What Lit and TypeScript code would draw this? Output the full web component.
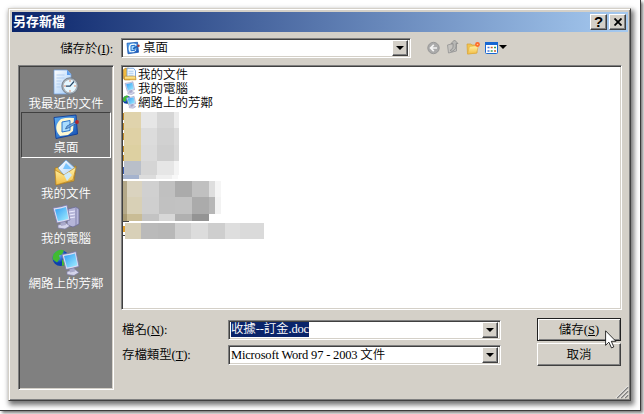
import { LitElement, html, svg, css } from "lit";
import { customElement } from "lit/decorators.js";

type Tile = [number, number, number, number, string];

const band = (y: number, h: number, edges: number[], colors: string[]): Tile[] =>
  colors.map((c, i) => [edges[i], y, edges[i + 1] - edges[i], h, c] as Tile);

const A = [124, 141, 157, 174, 179];
const B = [123, 127, 142, 159, 175, 192, 209, 215, 221];
const tiles: Tile[] = [
  ...band(112, 16, A, ["#e0d3ac", "#e6e6e6", "#d6d6d6", "#ebebeb"]),
  ...band(128, 17, A, ["#dfd1a5", "#dcdcdc", "#d1d1d1", "#dadada"]),
  ...band(145, 16, A, ["#ddd0a1", "#dadada", "#cecece", "#d8d8d8"]),
  ...band(161, 14, A, ["#b9bfc9", "#d5d5d5", "#e6e6e6", "#f4f4f4"]),
  ...band(175, 4, [123, 139, 156, 172, 178], ["#a5b3ce", "#dcdcdc", "#efefef", "#f8f8f8"]),
  ...band(181, 16, B, ["#b3a888", "#dad3bf", "#d0d0d0", "#c0c0c0", "#ababab", "#c0c0c0", "#dedede", "#f5f5f5"]),
  ...band(197, 17, B, ["#b3a888", "#d8d0b6", "#cfcfcf", "#c1c1c1", "#c2c2c2", "#ababab", "#b6b6b6", "#f2f2f2"]),
  ...band(214, 7, B.slice(0, 7), ["#a99b73", "#c9bc95", "#c3c3c3", "#d7d7d7", "#b0b0b0", "#949494"]),
  ...band(223, 16, [125, 141, 158, 175, 191, 208, 225, 240, 264],
    ["#d8d0b8", "#bababa", "#b8b8b8", "#d0d0d0", "#dcdcdc", "#cecece", "#dedede", "#dadada"]),
  [123, 113, 1, 7, "#c08a28"], [123, 123, 1, 7, "#c08a28"], [123, 133, 1, 7, "#c08a28"],
  [123, 146, 1, 6, "#c08a28"], [123, 155, 1, 6, "#c08a28"], [123, 167, 1, 7, "#3a5cb0"],
  [123, 221, 6, 1, "#444444"], [123, 226, 2, 6, "#e0a030"], [123, 235, 2, 1, "#444444"],
];

const defs = svg`<defs>
  <linearGradient id="scr" x2="1" y2="1"><stop stop-color="#2f9cf4"/><stop offset="1" stop-color="#a4efff"/></linearGradient>
  <linearGradient id="fold" x2="0" y2="1"><stop stop-color="#fff3a8"/><stop offset="1" stop-color="#f2bd45"/></linearGradient>
  <linearGradient id="blue" x2="1" y2="1"><stop stop-color="#5fb0f4"/><stop offset="1" stop-color="#1450b4"/></linearGradient>
  <linearGradient id="page" x2="1" y2="1"><stop stop-color="#ffffff"/><stop offset="1" stop-color="#9fcaf8"/></linearGradient>
  <radialGradient id="globe" cx=".35" cy=".3"><stop stop-color="#7cc4ff"/><stop offset="1" stop-color="#0b3fae"/></radialGradient>
</defs>`;

const monitor = svg`
  <path d="M6 21l8-2 4 3-5 3-7-1z" fill="#d4d4ea" stroke="#7e7ea8" stroke-width=".7"/>
  <path d="M8 17l5-1 1 5-5 1z" fill="#aaaacb"/>
  <path d="M1 4Q9 3 15 1L18 16Q11 18 5 19z" fill="#dcdcf2" stroke="#7777a5" stroke-width=".8"/>
  <path d="M3 5.500Q9 4.500 14 3L16.400 14.700Q11 16.400 6 17z" fill="url(#scr)"/>`;

const globe = svg`<circle cx="8.500" cy="9" r="8" fill="url(#globe)"/>
  <path d="M4 2.500q4-3 8-1l-2 4-3 1 1 3-3 4-4-3q-1-5 3-8zM10 11l4-2 2 3-3 4-3 1z" fill="#42ba32"/>`;

const art = {
  recent: svg`<path d="M2 1h13l4 4v20H2z" fill="url(#page)" stroke="#6d9fe0" stroke-width=".7"/>
    <path d="M15 1v5h4z" fill="#5c9cec"/><path d="M4.500 6h8M4.500 9h8M4.500 12h5M4.500 15h4M4.500 18h4" stroke="#a9c8ee" stroke-width=".8"/>
    <circle cx="18" cy="17" r="8.200" fill="#a8b0b8" stroke="#68727c" stroke-width=".8"/>
    <circle cx="18" cy="17" r="6.300" fill="#e5f7ff"/>
    <path d="M22 12.500L18 17.200h-4" fill="none" stroke="#244668" stroke-width="1.200"/>
    <circle cx="18" cy="12" r=".7" fill="#e06030"/><circle cx="18" cy="22" r=".7" fill="#e06030"/><circle cx="13" cy="17" r=".7" fill="#e06030"/><circle cx="23" cy="17" r=".7" fill="#e06030"/>`,
  desktop: svg`<path d="M2 4.500L24 2 25.500 21 4 25.500z" fill="url(#blue)" stroke="#0d3d98" stroke-width=".9"/>
    <path d="M9 6Q15 4 22 5l-1 13-5 4-8 1Q0 14 9 6z" fill="#fff9d2"/>
    <path d="M10 9l8-1.500v10L10 19z" fill="#a9dcff" stroke="#2d76cc" stroke-width="1"/>
    <path d="M13.500 16l1.500-3 8-4 1.200 1.500-8 4.500z" fill="#6fa8e4" stroke="#184888" stroke-width=".6"/>
    <circle cx="25" cy="9" r="1.900" fill="#b3272b"/>`,
  docs: svg`<path d="M3 9l8-2 3 3 10-3-2 15-18 4z" fill="#edbd4b" stroke="#9c7424" stroke-width=".7"/>
    <path d="M6 9L14 1l10 9-8 11z" fill="url(#page)" stroke="#5d9bd8" stroke-width=".7"/><path d="M14 4l6 6h-9z" fill="#78c4ff"/>
    <path d="M3 11l9 5 12-8-3 13-17 5z" fill="url(#fold)" stroke="#b88424" stroke-width=".7"/>
    <path d="M12 16l5-3 3 3-5 6z" fill="#cdeafc"/>`,
  computer: svg`<path d="M16 5l8-2 3 2v15l-6 3-6-2z" fill="#b5b5d8" stroke="#6b6b98" stroke-width=".8"/>
    <path d="M17 8l6-1M17 11l6-1M17 14l6-1" stroke="#ececff"/><path d="M24 4v17" stroke="#8585b1"/>${monitor}`,
  network: svg`${globe}<g transform="translate(9 1.500)">${monitor}</g>`,
  deskMini: svg`<path d="M2 4L23 2 25 22 4 25z" fill="url(#blue)" stroke="#1252b0" stroke-width="1.500"/>
    <path d="M8 6Q15 3 21 6l-1 13-5 3-8 0Q3 13 8 6z" fill="#eefaff"/>
    <path d="M10 9l8-1v10l-8 1z" fill="#a9dcff" stroke="#2270cc" stroke-width="2"/>
    <path d="M14 15l9-5" stroke="#1e64b8" stroke-width="3"/><circle cx="25" cy="9" r="2.500" fill="#a83c3c"/>`,
  docsMini: svg`<path d="M1 5l3-3h8l2 3v20H3L1 23z" fill="#f0b93c" stroke="#b07818" stroke-width="1.200"/>
    <path d="M8 2h13l4 5v15H8z" fill="#f4faff" stroke="#5c94d8" stroke-width="1.500"/>
    <path d="M11 8h10M11 12h10M11 16h10" stroke="#8ab8ea" stroke-width="1.400"/>
    <path d="M3 18h22l1 7H3z" fill="url(#fold)" stroke="#bd8420" stroke-width="1.200"/>`,
  pcMini: svg`<g transform="translate(3 0) scale(1.120 1.060)">${monitor}</g>`,
  netMini: svg`<g transform="translate(-1 0)">${globe}</g><g transform="translate(6 1) scale(1.080 1)">${monitor}</g>`,
};

const icon = (name: keyof typeof art, cls: string) =>
  html`<svg class=${cls} viewBox="0 0 28 27">${defs}${art[name]}</svg>`;

const arrow = html`<span class="drop"><svg width="8" height="4" viewBox="0 0 8 4"><path d="M0 0h8L4 4z"/></svg></span>`;

@customElement("app-root")
export class AppRoot extends LitElement {
  static styles = css`
    :host {
      display: block; width: 644px; height: 414px; overflow: hidden; background: #fff; color: #000;
      font: 350 12.500px/14px "Liberation Serif", "Noto Sans CJK TC", serif;
    }
    * { box-sizing: border-box; }
    .frame {
      width: 641px; height: 411px; padding: 8px 0 0 8px; border: solid #3c3c3c; border-width: 0 1px 1px 0;
      box-shadow: 2px 2px 3px #777;
    }
    .dialog {
      width: 623px; height: 393px; background: #d4d0c8; padding: 2px; display: flex; flex-direction: column;
      border: 1px solid; border-color: #d4d0c8 #404040 #404040 #d4d0c8; position: relative;
      box-shadow: inset 1px 1px #fff, inset -1px -1px #808080, 2px 3px 5px 1px rgba(0,0,0,.55);
    }
    .title {
      height: 20px; margin: 1px 0 0 1px; display: flex; align-items: center; gap: 2px; padding-right: 2px;
      background: linear-gradient(90deg, #0a246a, #a6caf0); color: #fff; font-weight: 700; font-size: 13px;
    }
    .title span { flex: 1; padding-left: 1px; }
    .raised {
      background: #d4d0c8; border: 1px solid; border-color: #fff #404040 #404040 #fff;
      box-shadow: inset -1px -1px #808080; display: flex; align-items: center; justify-content: center;
    }
    .cap { width: 17px; height: 16px; }
    .cap b { color: #000; font: 700 15px/14px "Liberation Sans", sans-serif; }
    .tools { display: flex; align-items: center; height: 20px; margin-top: 6px; }
    .tools .lbl { width: 102px; text-align: right; margin-right: 8px; padding-top: 1px; }
    .lbl { letter-spacing: -.1px; }
    .combo {
      height: 20px; background: #fff; border: 1px solid; border-color: #808080 #fff #fff #808080;
      box-shadow: inset 1px 1px #404040, inset -1px -1px #d4d0c8; padding: 2px; display: flex; align-items: center;
    }
    .combo .val { flex: 1; white-space: nowrap; }
    .where { width: 290px; }
    .where .mini { margin: 0 3px 0 2px; }
    .drop {
      width: 16px; height: 16px; background: #d4d0c8; border: 1px solid; border-color: #fff #404040 #404040 #fff;
      box-shadow: inset -1px -1px #808080; display: flex; align-items: center; justify-content: center;
    }
    .acts { margin-left: 16px; }
    .main { display: flex; gap: 7px; margin: 7px 0 0 7px; }
    .places {
      width: 96px; height: 325px; background: #808080; color: #fff; padding: 2px;
      border: 1px solid; border-color: #808080 #fff #fff #808080; box-shadow: inset 1px 1px #404040, inset -1px -1px #d4d0c8;
    }
    .place { height: 45px; display: flex; flex-direction: column; align-items: center; padding-top: 1px; }
    .place.on { border: 1px solid; border-color: #404040 #fff #fff #404040; background: #7b7b7b; padding-top: 0; margin-top: -1px; height: 46px; }
    .big { width: 28px; height: 27px; flex: none; }
    .place span { line-height: 14px; white-space: nowrap; padding-top: 1px; }
    .mini { width: 14px; height: 14px; flex: none; }
    .right { width: 501px; }
    .list {
      height: 245px; background: #fff; padding: 1px; overflow: hidden;
      border: 1px solid; border-color: #808080 #fff #fff #808080; box-shadow: inset 1px 1px #404040, inset -1px -1px #d4d0c8;
    }
    .item { display: flex; gap: 1px; height: 14px; white-space: nowrap; line-height: 16px; }
    .mosaic { display: block; }
    .form {
      display: grid; grid-template-columns: 106px 273px 36px 84px; justify-content: start;
      padding-left: 1px; margin-top: 8px; row-gap: 2px; align-items: center;
    }
    .btn { grid-column: 4; height: 23px; position: relative; }
    .btn.def { outline: 1px solid #202020; outline-offset: -1px; border-color: #000; box-shadow: inset 1px 1px #fff, inset -1px -1px #808080; z-index: 1; }
    mark { background: #0a246a; color: #fff; display: inline-block; height: 15px; line-height: 15px; letter-spacing: -.15px; }
    .row2 { margin-top: 1px; }
    .cursor { position: absolute; left: 67px; top: 11px; }
    .grip { width: 14px; height: 14px; position: absolute; left: 606px; top: 376px; }
    .lat { letter-spacing: -.18px; }
    u { text-underline-offset: 1px; text-decoration-thickness: 1px; }
  `;

  private place(name: keyof typeof art, label: string, on = false) {
    return html`<div class="place ${on ? "on" : ""}">${icon(name, "big")}<span>${label}</span></div>`;
  }

  private item(name: keyof typeof art, label: string) {
    return html`<div class="item">${icon(name, "mini")}<span>${label}</span></div>`;
  }

  render() {
    return html`<div class="frame"><div class="dialog">
      <div class="title"><span>另存新檔</span>
        <div class="raised cap"><b>?</b></div>
        <div class="raised cap"><svg width="8" height="8" viewBox="0 0 8 8"><path d="M.5 .5l7 7M7.500 .5l-7 7" stroke="#000" stroke-width="1.800"/></svg></div>
      </div>
      <div class="tools">
        <div class="lbl">儲存於(<u>I</u>):</div>
        <div class="combo where">${icon("deskMini", "mini")}<span class="val">桌面</span>${arrow}</div>
        <svg class="acts" width="84" height="18" viewBox="0 0 84 18">${defs}
          <circle cx="6.500" cy="9" r="5.700" fill="#aaa" stroke="#989898"/><path d="M10 9H4M6.800 5.800L3.600 9l3.200 3.200" fill="none" stroke="#f4f4f4" stroke-width="1.700"/>
          <path d="M20.500 6l4-1 1 1 4-1v7l-8 2z" fill="#c5c3bf" stroke="#999" stroke-width=".9"/>
          <path d="M23 11.500q4-2 3-7h-2l3.500-3.500L31 4.500h-2q1 6-4 8z" fill="#b8b8b5" stroke="#8c8c8c" stroke-width=".8"/>
          <path d="M40 5h4l1 1h5v8l-9.500 1z" fill="#f2c44f" stroke="#d6a035" stroke-width=".7"/><path d="M40.500 15l2-7.500 9-1-2 7.500z" fill="url(#fold)" stroke="#dba83c" stroke-width=".5"/>
          <circle cx="50.500" cy="5.500" r="2.400" fill="#ff6828"/><circle cx="50.500" cy="5.500" r=".8" fill="#ffd080"/>
          <rect x="58.500" y="3.500" width="12" height="11" rx="1" fill="#fff" stroke="#1767d2"/><path d="M58 4.500h13" stroke="#1767d2" stroke-width="3"/>
          <path d="M60.500 8.500h2M60.500 12h2" stroke="#4878d8" stroke-width="1.700"/><path d="M63.700 8.500h2M67 12h2" stroke="#c86030" stroke-width="1.700"/><path d="M67 8.500h2M63.700 12h2" stroke="#38a050" stroke-width="1.700"/>
          <path d="M72 6h8l-4 4z"/>
        </svg>
      </div>
      <div class="main">
        <div class="places">
          ${this.place("recent", "我最近的文件")}${this.place("desktop", "桌面", true)}${this.place("docs", "我的文件")}
          ${this.place("computer", "我的電腦")}${this.place("network", "網路上的芳鄰")}
        </div>
        <div class="right">
          <div class="list">
            ${this.item("docsMini", "我的文件")}${this.item("pcMini", "我的電腦")}${this.item("netMini", "網路上的芳鄰")}
            <svg class="mosaic" width="150" height="140" viewBox="123 109 150 140" shape-rendering="crispEdges">
              ${tiles.map(([x, y, w, h, c]) => svg`<rect x=${x} y=${y} width=${w} height=${h} fill=${c}></rect>`)}
            </svg>
          </div>
          <div class="form">
            <div class="lbl">檔名(<u>N</u>):</div>
            <div class="combo"><span class="val"><mark>收據--訂金.doc</mark></span>${arrow}</div>
            <div class="raised btn def"><span>儲存(<u>S</u>)</span>
              <svg class="cursor" width="12" height="19" viewBox="0 0 12 19"><path d="M.6 .8v14.500l3.300-3.100 2.600 5.700 2.300-1-2.500-5.600h4.600z" fill="#fff" stroke="#000" stroke-width=".8"/></svg>
            </div>
            <div class="lbl">存檔類型(<u>T</u>):</div>
            <div class="combo row2"><span class="val lat">Microsoft Word 97 - 2003 文件</span>${arrow}</div>
            <div class="raised btn">取消</div>
          </div>
        </div>
      </div>
      <svg class="grip" viewBox="0 0 14 14"><path d="M2 13L13 2M6 13l7-7M10 13l3-3" stroke="#808080" stroke-width="1.600"/><path d="M.8 13L13 .8M4.800 13L13 4.800M8.800 13L13 8.800" stroke="#fff" stroke-width=".8"/></svg>
    </div></div>`;
  }
}
